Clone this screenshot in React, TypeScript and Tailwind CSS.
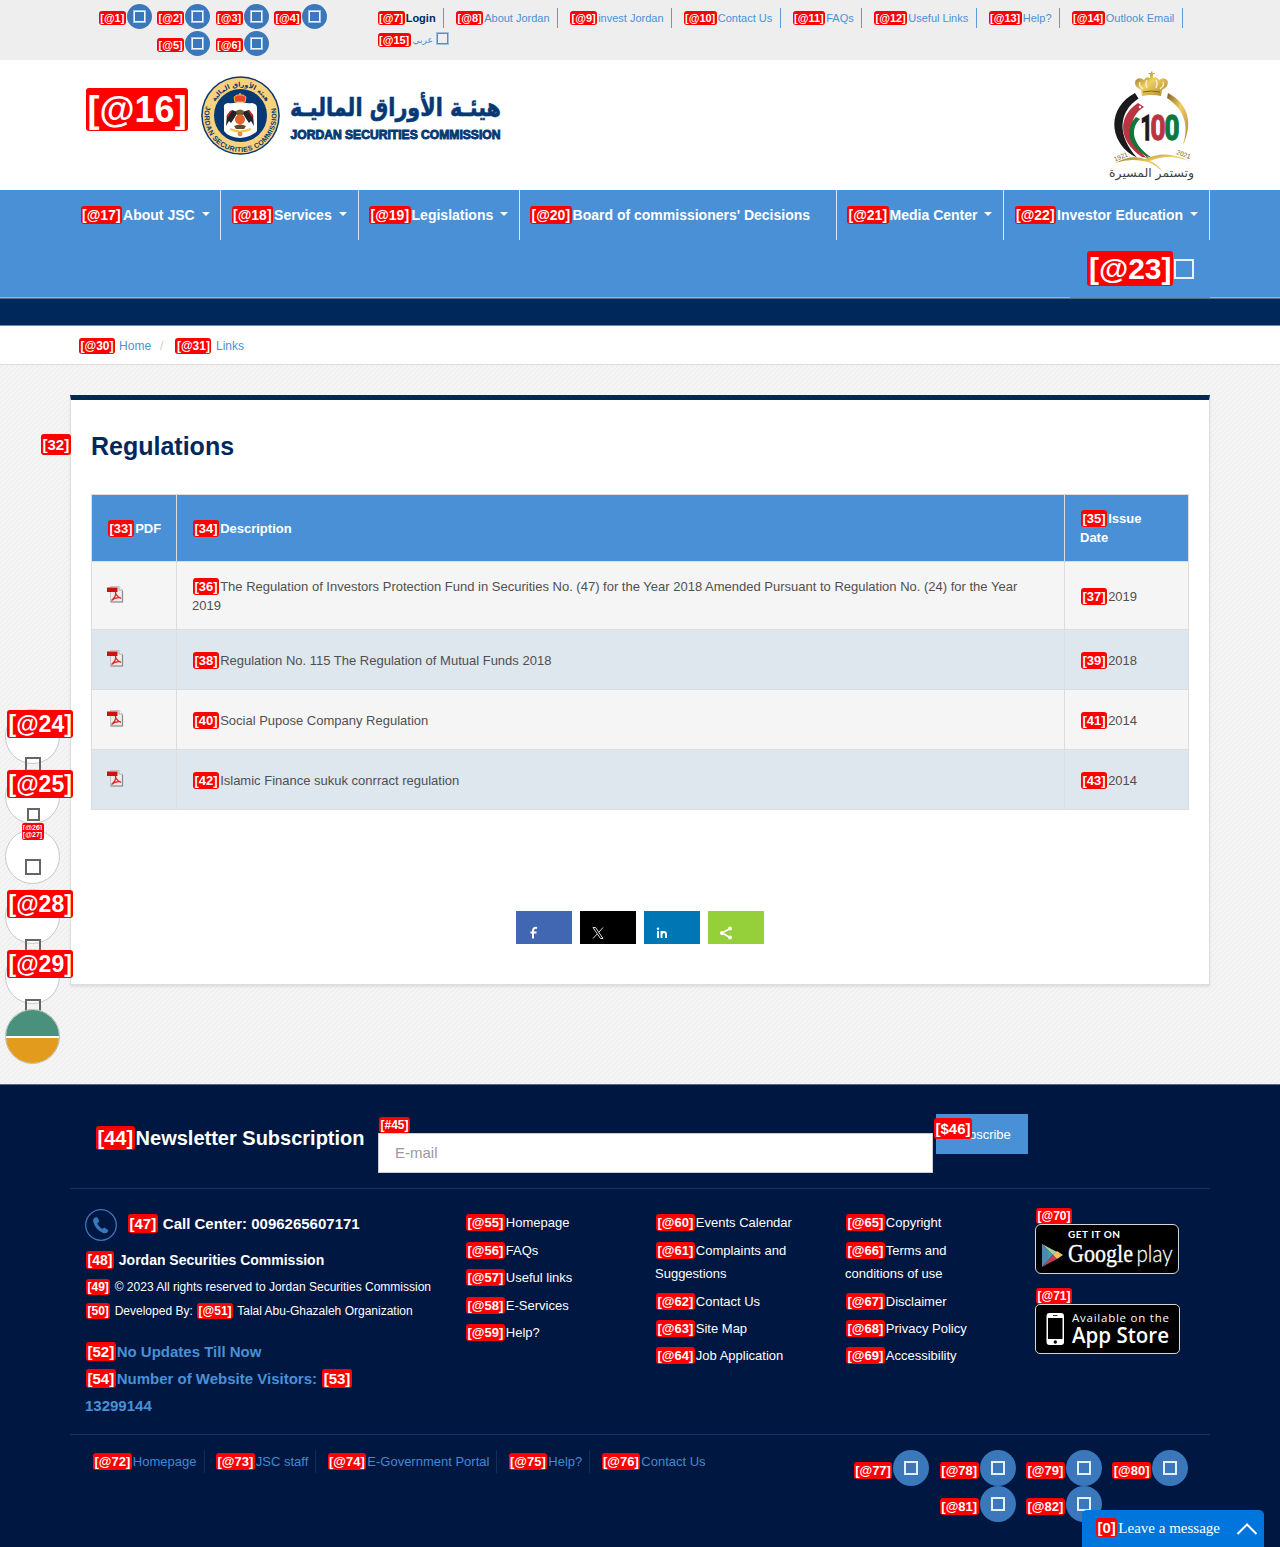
import React from 'react';

const ARABIC = 'DejaVu Sans, sans-serif';

function Tag({ children, className = '' }: { children: React.ReactNode; className?: string }) {
  return (
    <span className={`mx-px whitespace-nowrap rounded-[3px] bg-[#ff0000] px-[1.5px] py-px font-bold text-white ${className}`}>
      {children}
    </span>
  );
}

function Emblem() {
  return (
    <svg className="h-[79px] w-[79px]" viewBox="0 0 79 79">
      <defs>
        <path id="ring-bottom" d="M 5.2 29 A 36 36 0 1 0 73.8 29" />
        <path id="ring-top" d="M 11.3 34 A 28.7 28.7 0 0 1 67.7 34" />
      </defs>
      <circle cx="39.5" cy="39.5" r="39.3" fill="#063873" />
      <circle cx="39.5" cy="39.5" r="37.8" fill="#fbd27c" />
      <circle cx="39.5" cy="39.5" r="26.5" fill="#063873" />
      <text fontFamily="Liberation Sans, sans-serif" fontWeight="700" fontSize="7" fill="#063873">
        <textPath href="#ring-bottom" startOffset="1" textLength="131">JORDAN SECURITIES COMMISSION</textPath>
      </text>
      <text direction="rtl" textAnchor="middle" fontFamily={ARABIC} fontWeight="700" fontSize="6.5" fill="#063873">
        <textPath href="#ring-top" startOffset="50%">هيئة الأوراق المالية</textPath>
      </text>
      <path d="M23 32 Q22 28 27 27 Q35 28 39 24 Q43 28 51 27 Q56 28 56 32 L56 55 Q51 61 39 62 Q27 61 23 55Z" fill="#fff" />
      <path d="M34 26 L33 21 Q36 18 39 19 Q42 18 45 21 L44 26Z" fill="#e8452a" stroke="#fbb03b" strokeWidth="1" />
      <circle cx="39" cy="18" r="1.1" fill="#fbb03b" />
      <path d="M37 36 L31 34 L26 39 L25 50 L28 45 L30 47 L34 41Z" fill="#20242a" />
      <path d="M41 36 L48 34 L52 39 L53 50 L50 45 L48 47 L44 41Z" fill="#20242a" />
      <path d="M30 35 L26 41 M48 35 L52 41" stroke="#c9232b" strokeWidth="1.8" />
      <path d="M35 35 Q39 32 43 35 L42 39 H36Z" fill="#6f5a31" />
      <circle cx="39" cy="43.500" r="5" fill="#e4632a" />
      <path d="M33 50 Q39 47 45 50 L43 53 H35Z" fill="#69452a" />
      <path d="M29 53 Q39 58 50 53" stroke="#f2c744" strokeWidth="2" fill="none" />
      <circle cx="39" cy="58" r="2.400" fill="#e58e3f" />
    </svg>
  );
}

function Centenary() {
  return (
    <svg className="h-[112px] w-[90px]" viewBox="0 0 90 112">
      <defs>
        <linearGradient id="gold" x1="0" x2="1" y1="0" y2="1">
          <stop offset="0" stopColor="#7d6122" />
          <stop offset="0.45" stopColor="#f2cf63" />
          <stop offset="1" stopColor="#a88432" />
        </linearGradient>
      </defs>
      <path d="M34 20 Q26 16 28.500 10.500 Q32 6.500 37 10 Q39 6 43 8 V4 H41.500 V3 H44 V1.500 H45.500 V3 H48 V4 H46 V8 Q50 6 52 10 Q57 6.500 60.500 10.500 Q62.500 16 55 20 L54 26 Q44.500 24 35 26Z" fill="url(#gold)" />
      <path d="M36 19 Q31 15 33 12 M40 18 Q38 13 40 10 M49 18 Q51 13 49 10 M53 19 Q58 15 56 12" stroke="#fff4c8" strokeWidth="1.300" fill="none" />
      <path d="M36 22 Q44.500 20 53 22" stroke="#7d6122" strokeWidth="1" fill="none" />
      <path d="M28 23 L31.500 28.500 C11 42 10 66 30 87.500 L25 85 C2 70 0 38 28 23Z" fill="#1b191c" />
      <path d="M31 33 L37 37 C20 47 20 70 42 88 L35 87 C10 70 11 46 31 33Z" fill="#b93542" />
      <path d="M33 42 C21 54 22 70 39 87" fill="none" stroke="#fff" strokeWidth=".8" />
      <circle cx="33" cy="37" r="1.200" fill="#fff" />
      <path d="M29 47 L33 49 C22 60 26 75 45 88 L39 86 C18 73 19 57 29 47Z" fill="#11763a" />
      <path d="M61 23 C82 34 86 54 76 75 C82 56 78 40 60 28Z" fill="url(#gold)" />
      <g fontFamily="Roboto, sans-serif" fontWeight="700" fontSize="35" strokeWidth="1.4">
        <text x="33.500" y="69.500" textLength="12" lengthAdjust="spacingAndGlyphs" fill="#1b191c" stroke="#1b191c">1</text>
        <text x="43.500" y="69.500" textLength="15" lengthAdjust="spacingAndGlyphs" fill="#b93542" stroke="#b93542">0</text>
        <text x="57.500" y="69.500" textLength="15" lengthAdjust="spacingAndGlyphs" fill="#11763a" stroke="#11763a">0</text>
      </g>
      <path d="M8 93 Q24 84 38 89 Q60 79 82 91 Q62 83 43 91 Q50 94 55 101 Q44 91 35 91 Q23 88 8 93Z" fill="url(#gold)" />
      <g fontFamily="Liberation Sans, sans-serif" fontSize="6.500" fill="#7d6122">
        <text x="8" y="91.500" transform="rotate(-22 8 91.500)">1921</text>
        <text x="69" y="84" transform="rotate(20 69 84)">2021</text>
      </g>
      <text x="87" y="107" direction="rtl" fontFamily={ARABIC} fontSize="12" fill="#3e3e40" textLength="85" lengthAdjust="spacingAndGlyphs">وتستمر المسيرة</text>
    </svg>
  );
}

function PdfIcon() {
  return (
    <svg className="-mt-px h-[17px] w-[17px]" viewBox="0 0 17 17">
      <path d="M3.500 .5 H12 L15.500 4 V16 H3.500Z" fill="#ececec" stroke="#c4c4c4" />
      <path d="M12 .5 V4 H15.500" fill="#fff" stroke="#aaa" />
      <path d="M3.500 16 H15.500 V5" fill="none" stroke="#8a8a8a" strokeWidth="1.200" />
      <rect x="0" y="1.500" width="10.500" height="4.500" fill="#d40f12" />
      <path d="M8.300 6 Q9 10 14 12.500 M8.800 6.500 Q8.800 11 4.500 14.500 Q8 11 14 11.800" fill="none" stroke="#e02424" strokeWidth="1.300" />
    </svg>
  );
}

const topLinks: [string, string, string][] = [
  ['[@7]', 'Login', 'w-[66.5px]'],
  ['[@8]', 'About Jordan', 'w-[102px]'],
  ['[@9]', 'invest Jordan', 'w-[101.5px]'],
  ['[@10]', 'Contact Us', 'w-[97px]'],
  ['[@11]', 'FAQs', 'w-[69.5px]'],
  ['[@12]', 'Useful Links', 'w-[102.5px]'],
  ['[@13]', 'Help?', 'w-[71px]'],
  ['[@14]', 'Outlook Email', 'w-[111px]'],
];

function TopBar() {
  return (
    <div className="flex h-[60px] bg-[#eeeeee] text-[11px]">
      <div className="ml-[97.5px] flex w-[234px] flex-wrap content-start justify-center pt-[3.5px]">
        {[1, 2, 3, 4, 5, 6].map((n) => (
          <div key={n} className="flex h-[27px] w-[58.4px] items-start">
            <span className="mt-[6px] leading-[16px]"><Tag>{`[@${n}]`}</Tag></span>
            <span className="flex h-[25px] w-[25px] items-center justify-center rounded-full bg-[#3a77bb]">
              <span className="h-[11px] w-[11px] border-[1.5px] border-[#f2f8ff] outline outline-[0.5px] outline-[#f2f8ff]/60" />
            </span>
          </div>
        ))}
      </div>
      <div className="ml-[46px] pt-2">
        <div className="flex gap-3">
          {topLinks.map(([tag, text, w], i) => (
            <div key={tag} className={`h-5 whitespace-nowrap border-r border-[#5f9bd8] indent-[-1px] leading-5 ${w} ${i === 0 ? 'font-bold text-[#00285b]' : 'text-[#4a90d6]'}`}>
              <Tag>{tag}</Tag>{text}
            </div>
          ))}
        </div>
        <div className="-ml-px mt-[2px] flex h-5 items-center leading-5 text-[#4a90d6]">
          <span><Tag>[@15]</Tag></span>
          <span dir="rtl" className="w-[21px] whitespace-nowrap font-['DejaVu_Sans'] text-[9px]">عربي</span>
          <span className="-mt-[3px] ml-[4.500px] h-[11px] w-[11px] border-[1.5px] border-[#4a90d6] outline outline-[0.5px] outline-[#4a90d6]/50" />
        </div>
      </div>
    </div>
  );
}

function Header() {
  return (
    <header className="flex h-[130px] items-start bg-white">
      <span className="ml-[85px] mt-[28px] text-[36px] leading-[43px]"><Tag>[@16]</Tag></span>
      <div className="ml-[12px] mt-4"><Emblem /></div>
      <svg className="ml-[9px] mt-[30px] h-[56px] w-[214px]" viewBox="0 0 214 56">
        <text x="212" y="26" direction="rtl" fontFamily={ARABIC} fontWeight="700" fontSize="25" fill="#063873" stroke="#063873" strokeWidth=".6" textLength="211" lengthAdjust="spacingAndGlyphs">هيئـة الأوراق الماليـة</text>
        <text x="1.500" y="49.300" fontFamily="Liberation Sans, sans-serif" fontWeight="700" fontSize="12" fill="#063873" stroke="#063873" strokeWidth=".9" textLength="210" lengthAdjust="spacingAndGlyphs">JORDAN SECURITIES COMMISSION</text>
      </svg>
      <div className="ml-auto mr-[83px] mt-[10px]"><Centenary /></div>
    </header>
  );
}

const navItems: [string, string, string, boolean][] = [
  ['[@17]', 'About JSC', 'w-[151px]', true],
  ['[@18]', 'Services', 'w-[137.5px]', true],
  ['[@19]', 'Legislations', 'w-[161px]', true],
  ['[@20]', "Board of commissioners' Decisions", 'w-[317px]', false],
  ['[@21]', 'Media Center', 'w-[167.5px]', true],
  ['[@22]', 'Investor Education', 'w-[205.5px]', true],
];

function Nav() {
  return (
    <>
      <nav className="h-[107px] bg-[#4a90d6] px-[70px] text-sm font-bold text-white">
        <div className="flex">
          {navItems.map(([tag, text, w, caret]) => (
            <div key={tag} className={`flex h-[50px] items-center whitespace-nowrap border-r border-[#d6e7f7] pl-[9.5px] ${w}`}>
              <span><Tag>{tag}</Tag>{text}</span>
              {caret && <span className="-mt-[2px] ml-[7px] border-x-4 border-t-4 border-x-transparent border-t-white" />}
            </div>
          ))}
        </div>
        <div className="flex h-[57px] items-center justify-end pr-[16px]">
          <span className="text-[30px] leading-[37px]"><Tag>[@23]</Tag></span>
          <span className="h-5 w-5 border-2 border-[#e8f2fb]" />
        </div>
      </nav>
      <div className="flex h-[29px] flex-col border-b border-[#6c88a8] bg-[#00285b]">
        <div className="flex h-px">
          <div className="w-[1070px] bg-[#8ab6e0]" />
          <div className="w-[140px] bg-[#4a90d6]" />
          <div className="flex-1 bg-[#8ab6e0]" />
        </div>
        <div className="h-px bg-[#53718f]" />
      </div>
      <div className="flex h-[39px] items-center whitespace-nowrap border-b border-[#dcdcdc] bg-white pl-[78px] pt-px text-xs leading-4 text-[#4a90d6]">
        <span><Tag>[@30]</Tag></span>
        <span className="ml-[3px]">Home</span>
        <span className="ml-[9px] text-[#ccc]">/</span>
        <span className="ml-[11px]"><Tag>[@31]</Tag></span>
        <span className="ml-[3.5px]">Links</span>
      </div>
    </>
  );
}

const rows: [string, React.ReactNode, string, string, string][] = [
  ['[36]', <>The Regulation of Investors Protection Fund in Securities No. (47) for the Year 2018 Amended Pursuant to Regulation No. (24) for the Year<br />2019</>, '[37]', '2019', 'h-[68px]'],
  ['[38]', 'Regulation No. 115 The Regulation of Mutual Funds 2018', '[39]', '2018', 'h-[60px]'],
  ['[40]', 'Social Pupose Company Regulation', '[41]', '2014', 'h-[60px]'],
  ['[42]', 'Islamic Finance sukuk conrract regulation', '[43]', '2014', 'h-[60px]'],
];

const CELL = 'flex items-center border-b border-r border-[#dddddd] pl-[15px]';

function RegulationsTable() {
  return (
    <div className="w-[1098px] border-l border-t border-[#dddddd] text-[13px] leading-[19px] text-[#505050]">
      <div className="grid h-[67px] grid-cols-[85px_888px_124px] bg-[#4a90d6] font-bold text-white">
        <div className={CELL}><span><Tag>[33]</Tag>PDF</span></div>
        <div className={CELL}><span><Tag>[34]</Tag>Description</span></div>
        <div className={CELL}><span><Tag>[35]</Tag>Issue<br />Date</span></div>
      </div>
      {rows.map(([t1, desc, t2, year, h], i) => (
        <div key={t1} className={`grid grid-cols-[85px_888px_124px] ${h} ${i % 2 ? 'bg-[#dee6ee]' : 'bg-[#f5f5f5]'}`}>
          <div className={`${CELL} pb-[2px]`}><PdfIcon /></div>
          <div className={`${CELL} ${i > 0 ? 'pt-[2px]' : ''}`}><span className="whitespace-nowrap"><Tag>{t1}</Tag>{desc}</span></div>
          <div className={`${CELL} pt-[2px]`}><span><Tag>{t2}</Tag>{year}</span></div>
        </div>
      ))}
    </div>
  );
}

function ShareButtons() {
  const box = 'flex h-[33px] w-14 items-center pl-[11px] pt-[11px]';
  return (
    <div className="flex gap-2">
      <div className={`${box} bg-[#4267b2]`}>
        <svg className="h-[14px] w-[14px]" viewBox="0 0 14 14"><path d="M10 2 Q6 1 6 5 M6 4 V12.500 M3.500 6.500 H9.500" stroke="#fff" strokeWidth="2" fill="none" /></svg>
      </div>
      <div className={`${box} bg-black`}>
        <svg className="h-[14px] w-[14px]" viewBox="0 0 14 14"><path d="M2 1.500 H4.500 L12 12.500 H9.500Z M12 1.500 L7.800 6.200 M6.200 8 L2 12.500" stroke="#ddd" strokeWidth="1" fill="none" /></svg>
      </div>
      <div className={`${box} bg-[#0077b5]`}>
        <svg className="h-[14px] w-[14px]" viewBox="0 0 14 14"><path d="M3 5 V12 M6.500 5 V12 M6.500 8.500 Q6.700 6 9 6 Q11 6 11 8.500 V12" stroke="#fff" strokeWidth="1.900" fill="none" /><circle cx="3" cy="2.800" r="1.200" fill="#fff" /></svg>
      </div>
      <div className={`${box} bg-[#95d03a]`}>
        <svg className="h-[14px] w-[14px]" viewBox="0 0 14 14"><path d="M11 2.500 L3 7 L11 11.500" stroke="#fff" strokeWidth="1.500" fill="none" /><circle cx="11" cy="2.500" r="2" fill="#fff" /><circle cx="3" cy="7" r="2" fill="#fff" /><circle cx="11" cy="11.500" r="2" fill="#fff" /></svg>
      </div>
    </div>
  );
}

function SideButton({ tag, square }: { tag?: string; square: string }) {
  return (
    <div className="relative h-[55px] w-[55px] rounded-full border border-[#c8c8c8] bg-white">
      <span className={`absolute border-2 border-[#666] ${square}`} />
      {tag && <span className="absolute left-0 top-0 text-[23px] leading-[29px]"><Tag>{tag}</Tag></span>}
    </div>
  );
}

function SideBar() {
  return (
    <div className="absolute left-[5px] top-[709px] flex flex-col gap-[5px]">
      <SideButton tag="[@24]" square="left-[18.5px] top-[47px] h-4 w-4" />
      <SideButton tag="[@25]" square="left-[20.5px] top-[38px] h-[13px] w-[13px]" />
      <div className="relative">
        <SideButton square="left-[18.5px] top-[29px] h-4 w-4" />
        <span className="absolute -top-[6px] left-[16.5px] h-[17px] w-[22px] overflow-hidden rounded-[2px] bg-[#ff0000] text-center text-[7px] font-bold text-white">
          <span className="block h-[7px] overflow-hidden leading-[10px]">[@26]</span>
          <span className="block leading-[9px]">[@27]</span>
        </span>
      </div>
      <SideButton tag="[@28]" square="left-[18.5px] top-[49px] h-4 w-4" />
      <SideButton tag="[@29]" square="left-[18.5px] top-[49px] h-4 w-4" />
      <div className="relative flex h-[55px] w-[55px] flex-col overflow-hidden rounded-full border border-[#b5bdb5] bg-white">
        <div className="h-[26px] bg-[#4a917d]" />
        <div className="mt-[2px] flex-1 bg-[#e29b1d]" />
      </div>
    </div>
  );
}

function LinkColumn({ items }: { items: [number, React.ReactNode][] }) {
  return (
    <ul className="w-[190px] text-[13px] leading-[23.4px]">
      {items.map(([n, label]) => (
        <li key={n} className="mb-1"><Tag>{`[@${n}]`}</Tag>{label}</li>
      ))}
    </ul>
  );
}

function GooglePlay() {
  return (
    <svg className="h-[50px] w-[144px]" viewBox="0 0 144 50">
      <rect x=".5" y=".5" width="143" height="49" rx="5.500" fill="#000" stroke="#d5d5d5" />
      <path d="M7 20 L18 31 L7 43Z" fill="#3f9bb8" />
      <path d="M7 20 L22 28 L18 31Z" fill="#a5cf9a" />
      <path d="M7 43 L22 35 L18 31Z" fill="#c43b57" />
      <path d="M18 31 L22 27 L28 31 L22 35Z" fill="#f6bd60" />
      <path d="M7 20 L13 26 V37 L7 43Z" fill="#4e7fae" opacity=".6" />
      <text x="33" y="14.300" fontFamily="Lato, sans-serif" fontWeight="700" fontSize="10" fill="#fff" textLength="52">GET IT ON</text>
      <text x="33" y="38" fontFamily="Liberation Serif, serif" fontSize="25" fill="#fff" stroke="#fff" strokeWidth=".3" textLength="65" lengthAdjust="spacingAndGlyphs">Google</text>
      <text x="101.500" y="38" fontFamily="Lato, sans-serif" fontWeight="300" fontSize="23" fill="#fff" stroke="#fff" strokeWidth=".3" textLength="36" lengthAdjust="spacingAndGlyphs">play</text>
    </svg>
  );
}

function AppStore() {
  return (
    <svg className="h-[50px] w-[145px]" viewBox="0 0 145 50">
      <rect x=".5" y=".5" width="144" height="49" rx="4.500" fill="#000" stroke="#d5d5d5" />
      <rect x="11.500" y="9" width="17.500" height="32" rx="3" fill="#fff" />
      <rect x="13" y="14" width="14.500" height="21" fill="#000" />
      <path d="M18 11.500 H22.500" stroke="#333" />
      <circle cx="20.300" cy="38" r="1.700" fill="#000" />
      <text x="37" y="18" fontFamily="Open Sans, sans-serif" fontWeight="500" fontSize="11.500" fill="#fff" textLength="97">Available on the</text>
      <text x="37" y="38.500" fontFamily="Open Sans, sans-serif" fontWeight="600" fontSize="22" fill="#fff" textLength="97" lengthAdjust="spacingAndGlyphs">App Store</text>
    </svg>
  );
}

const bottomLinks: [string, string, string][] = [
  ['[@72]', 'Homepage', 'w-[112.5px] border-r'],
  ['[@73]', 'JSC staff', 'w-[101px] border-r'],
  ['[@74]', 'E-Government Portal', 'w-[170.5px] border-r'],
  ['[@75]', 'Help?', 'w-[82.5px] border-r'],
  ['[@76]', 'Contact Us', ''],
];

function Footer() {
  return (
    <footer className="h-[463px] border-t border-[#5d6883] bg-[#001742] px-[70px] text-white">
      <div className="flex h-[104px] items-start border-b border-[#0c3768]">
        <div className="ml-[25px] mt-[38px] w-[283px] whitespace-nowrap text-xl font-bold leading-[30px]"><Tag>[44]</Tag>Newsletter Subscription</div>
        <div className="mt-[32px] w-[555px]">
          <div className="h-4 text-xs leading-[17px]"><Tag>[#45]</Tag></div>
          <div className="relative flex h-[40px] items-center border border-[#ccc] bg-white pl-4 text-[15px] text-[#999]">E-mail</div>
        </div>
        <div className="relative ml-[3px] mt-[29px] h-[40px] w-[92px] bg-[#4a90d6] pl-[17px] text-[13px] leading-[41px]">
          Subscribe
          <span className="absolute -left-[3px] top-[4px] text-[15px] leading-[22px]"><Tag className="py-[2px]!">[$46]</Tag></span>
        </div>
      </div>
      <div className="flex h-[246px] items-start border-b border-[#0c3768]">
        <div className="ml-[15px] mt-5 w-[380px]">
          <div className="flex items-start">
            <svg className="h-8 w-8" viewBox="0 0 32 32">
              <circle cx="16" cy="16" r="15.300" fill="none" stroke="#3a77bb" strokeWidth="1.300" />
              <path d="M10 8.500 Q7.500 9.500 8.300 13 Q10.500 20.500 18 24 Q22 25 23.500 21.500 L19.500 18.500 Q18 19 17 20 Q13.500 17.500 12.300 14.500 L14.200 12.500 Q13.800 9 11.500 8Z" fill="#3a77bb" />
            </svg>
            <div className="ml-[10px] text-[15px] font-bold leading-[30px]"><Tag>[47]</Tag> Call Center: 0096265607171</div>
          </div>
          <div className="mt-[8px] text-sm font-bold leading-[22px]"><Tag>[48]</Tag> Jordan Securities Commission</div>
          <div className="mt-[4px] text-xs leading-6"><Tag>[49]</Tag> © 2023 All rights reserved to Jordan Securities Commission</div>
          <div className="text-xs leading-6"><Tag>[50]</Tag> Developed By: <Tag>[@51]</Tag> Talal Abu-Ghazaleh Organization</div>
          <div className="mt-[15px] text-[15px] font-bold leading-[27px] text-[#4a90d6]">
            <div><Tag>[52]</Tag>No Updates Till Now</div>
            <div><Tag>[54]</Tag>Number of Website Visitors: <Tag>[53]</Tag></div>
            <div>13299144</div>
          </div>
        </div>
        <div className="mt-[22.3px] flex">
          <LinkColumn items={[[55, 'Homepage'], [56, 'FAQs'], [57, 'Useful links'], [58, 'E-Services'], [59, 'Help?']]} />
          <LinkColumn items={[[60, 'Events Calendar'], [61, <>Complaints and<br />Suggestions</>], [62, 'Contact Us'], [63, 'Site Map'], [64, 'Job Application']]} />
          <LinkColumn items={[[65, 'Copyright'], [66, <>Terms and<br />conditions of use</>], [67, 'Disclaimer'], [68, 'Privacy Policy'], [69, 'Accessibility']]} />
        </div>
        <div className="mt-[19px] text-xs leading-4">
          <div className="h-4 leading-[17px]"><Tag>[@70]</Tag></div>
          <div className="relative"><GooglePlay /></div>
          <div className="mt-[14px] h-4 leading-[17px]"><Tag>[@71]</Tag></div>
          <div className="relative"><AppStore /></div>
        </div>
      </div>
      <div className="flex items-start justify-between pt-[15px] text-[13px]">
        <div className="ml-[22px] flex gap-[10.5px] text-[#4289d0]">
          {bottomLinks.map(([tag, text, w]) => (
            <div key={tag} className={`h-[23px] whitespace-nowrap border-[#0b2f5c] leading-[23px] ${w}`}><Tag>{tag}</Tag>{text}</div>
          ))}
        </div>
        <div className="mr-[12.5px] flex w-[345px] flex-wrap justify-center">
          {[77, 78, 79, 80, 81, 82].map((n) => (
            <div key={n} className="flex h-9 w-[86.2px] items-center">
              <span className="mt-[5px] leading-[18px]"><Tag>{`[@${n}]`}</Tag></span>
              <span className="flex h-9 w-9 items-center justify-center rounded-full bg-[#3a77bb]">
                <span className="h-[14px] w-[14px] border-2 border-[#e3f0fc]" />
              </span>
            </div>
          ))}
        </div>
      </div>
    </footer>
  );
}

export default function App() {
  return (
    <div className="relative h-[1547px] w-[1280px] overflow-hidden bg-[#f4f4f4] bg-[linear-gradient(135deg,#f5f5f5_25%,#efefef_25%,#efefef_50%,#f5f5f5_50%,#f5f5f5_75%,#efefef_75%)] bg-[length:5px_5px] font-['Liberation_Sans',sans-serif]">
      <TopBar />
      <Header />
      <Nav />
      <main className="h-[719px] pt-[30px]">
        <div className="relative mx-auto h-[590px] w-[1140px] border border-t-[5px] border-[#dddddd] border-t-[#00285b] bg-white pl-5 shadow-[0_2px_2px_rgba(0,0,0,0.08)]">
          <span className="absolute -left-[31px] top-[34px] text-[15px] leading-[22px]"><Tag className="py-[2px]!">[32]</Tag></span>
          <h1 className="pt-[28px] text-[25px] font-bold leading-[36px] text-[#00285b]">Regulations</h1>
          <div className="mt-[30px]"><RegulationsTable /></div>
          <div className="ml-[425px] mt-[101px]"><ShareButtons /></div>
        </div>
      </main>
      <Footer />
      <SideBar />
      <div className="absolute bottom-0 right-4 flex h-[37px] w-[182px] items-center rounded-t-[5px] bg-[#0076dd] pl-[13px] text-[15px] text-white">
        <span><Tag>[0]</Tag></span>
        <span className="w-[118px] whitespace-nowrap font-['Liberation_Serif',serif]">Leave a message</span>
        <svg className="h-[12px] w-[22px]" viewBox="0 0 22 12"><path d="M1.500 11 L11 1.500 L20.500 11" fill="none" stroke="#fff" strokeWidth="2" /></svg>
      </div>
    </div>
  );
}
